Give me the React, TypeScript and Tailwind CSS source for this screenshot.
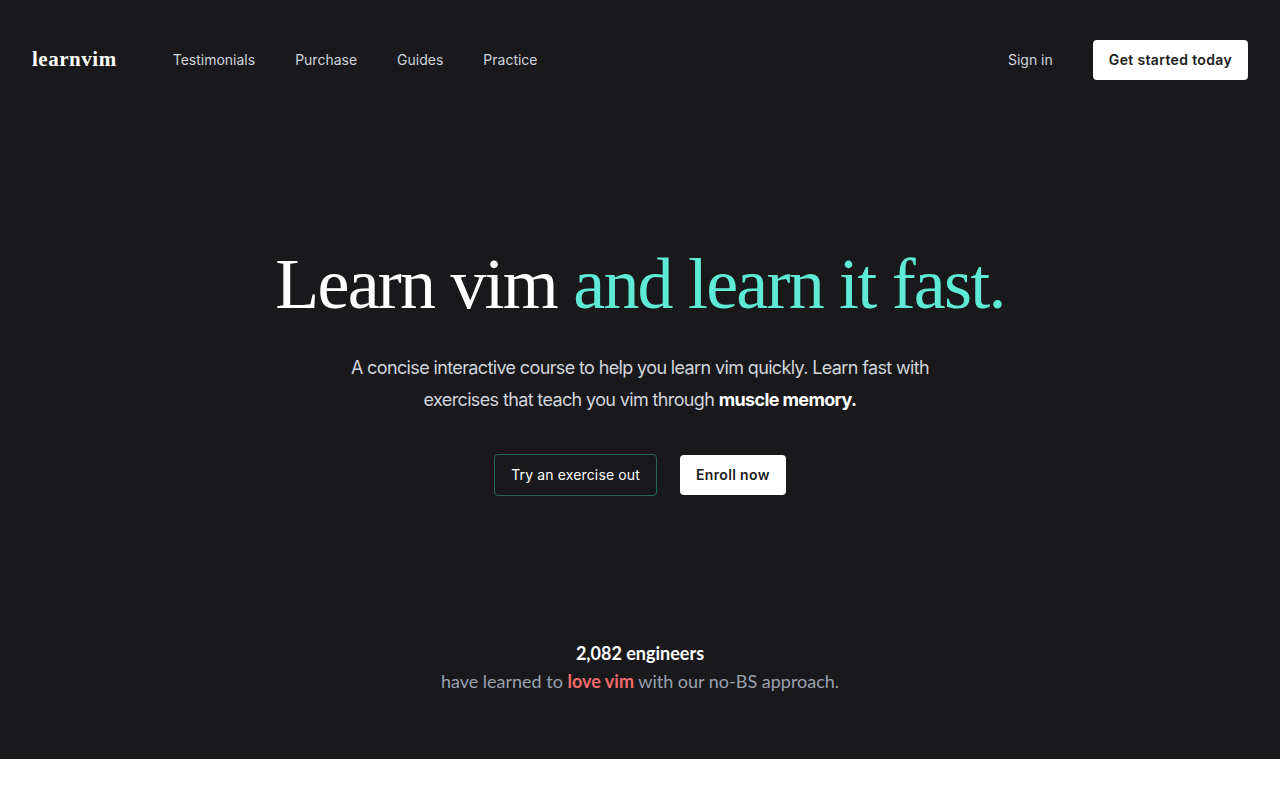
import { Fragment } from 'react';

const NAV_LINKS = ['Testimonials', 'Purchase', 'Guides', 'Practice'];

export default function App() {
  return (
    <Fragment>
      <div className="bg-[#19191b] font-['Inter',sans-serif] text-white">
        {/* Header */}
        <header className="flex h-[120px] items-center justify-between px-8">
          <div className="flex items-center">
            <a className="font-['Liberation_Serif',serif] text-[21px] font-bold tracking-wide text-white">learnvim</a>
            <nav className="ml-14 flex items-center gap-10">
              {NAV_LINKS.map((l) => (
                <a key={l} className="text-sm text-gray-300">{l}</a>
              ))}
            </nav>
          </div>
          <div className="flex items-center gap-10">
            <a className="text-sm text-gray-300">Sign in</a>
            <button className="h-10 rounded-sm bg-white px-4 text-sm font-semibold tracking-wide text-[#1b1b20]">
              Get started today
            </button>
          </div>
        </header>

        {/* Hero */}
        <section className="flex flex-col items-center pt-[128px] text-center">
          <h1 className="font-['Liberation_Serif',serif] text-[72px] leading-none tracking-tight text-white">
            Learn vim <span className="text-[#5eead4]">and learn it fast.</span>
          </h1>
          <p className="mt-8 max-w-[584px] text-lg leading-8 tracking-[-0.035em] text-gray-300">
            A concise interactive course to help you learn vim quickly. Learn fast with exercises that teach you vim
            through <span className="font-bold text-white">muscle memory.</span>
          </p>
          <div className="mt-[38px] flex items-center gap-[23px]">
            <button className="h-[42px] rounded-sm border border-[#1f6b5c] px-4 text-sm tracking-[0.01em] text-white">
              Try an exercise out
            </button>
            <button className="h-10 rounded-sm bg-white px-4 text-sm font-semibold tracking-wide text-[#1b1b20]">
              Enroll now
            </button>
          </div>
        </section>

        {/* Social proof */}
        <section className="flex flex-col items-center pb-16 pt-[143px] text-center font-['Lato',sans-serif] text-lg leading-7">
          <p className="font-bold text-white">2,082 engineers</p>
          <p className="text-gray-400">
            have learned to <span className="font-bold text-[#f26b6b]">love vim</span> with our no-BS approach.
          </p>
        </section>
      </div>
      <div className="h-[41px] bg-white" />
    </Fragment>
  );
}
